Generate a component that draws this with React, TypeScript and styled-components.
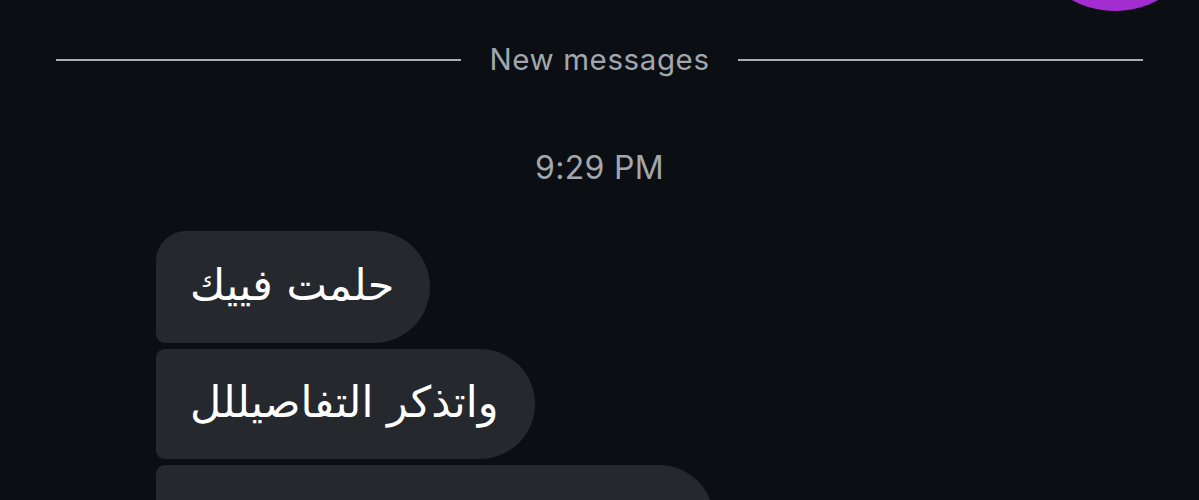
import React from "react";
import styled, { createGlobalStyle } from "styled-components";

const GlobalStyle = createGlobalStyle`
  html, body {
    margin: 0;
    padding: 0;
    background: #0b0e12;
  }
  body {
    font-family: Inter, "Noto Sans", "DejaVu Sans", sans-serif;
    -webkit-font-smoothing: antialiased;
  }
`;

const Page = styled.div`
  width: 1199px;
  height: 500px;
  overflow: hidden;
  box-sizing: border-box;
  padding: 0 56px;
  background: #0b0e12;
  display: flex;
  flex-direction: column;
`;

const AvatarRow = styled.div`
  height: 11px;
  display: flex;
  justify-content: flex-end;
  flex-shrink: 0;
`;

const Avatar = styled.div`
  width: 180px;
  height: 180px;
  border-radius: 50%;
  background: #a42dd2;
  margin-top: -169px;
  margin-right: -62px;
  flex-shrink: 0;
`;

const Divider = styled.div`
  margin-top: 36px;
  display: flex;
  align-items: center;
  gap: 28px;
  height: 26px;
  flex-shrink: 0;
`;

const Rule = styled.div`
  flex: 1;
  height: 2px;
  background: #a8adb4;
`;

const DividerLabel = styled.span`
  font-size: 29.5px;
  letter-spacing: 0.6px;
  color: #a2a7ae;
  line-height: 1;
  white-space: nowrap;
`;

const Timestamp = styled.div`
  margin-top: 79px;
  text-align: center;
  font-size: 32px;
  color: #a2a7ae;
  line-height: 1;
  letter-spacing: 0.3px;
  flex-shrink: 0;
`;

const Messages = styled.div`
  margin-top: 47px;
  padding-left: 100px;
  display: flex;
  flex-direction: column;
  align-items: flex-start;
  gap: 6px;
  flex-shrink: 0;
`;

type Pos = "first" | "middle";

const Bubble = styled.div<{ $pos: Pos; $h: number }>`
  background: #25282d;
  color: #ffffff;
  height: ${(p) => p.$h}px;
  box-sizing: border-box;
  padding: 0 36px 0 34px;
  display: flex;
  align-items: center;
  border-radius: ${(p) =>
    p.$pos === "first" ? "30px 56px 56px 9px" : "9px 56px 56px 9px"};
  font-family: "DejaVu Sans", "Noto Sans", sans-serif;
  font-size: 43px;
  line-height: 1;
  white-space: nowrap;
  flex-shrink: 0;
`;

const BubbleText = styled.span`
  direction: rtl;
  unicode-bidi: isolate;
  padding-bottom: 4px;
`;

const messages: { text: string; pos: Pos; h: number }[] = [
  { text: "حلمت فييك", pos: "first", h: 112 },
  { text: "واتذكر التفاصيللل", pos: "middle", h: 110 },
  { text: "كنا نمشي سوا ع شط البحر", pos: "middle", h: 110 },
];

export default function App() {
  return (
    <>
      <GlobalStyle />
      <Page>
        <AvatarRow>
          <Avatar />
        </AvatarRow>
        <Divider>
          <Rule />
          <DividerLabel>New messages</DividerLabel>
          <Rule />
        </Divider>
        <Timestamp>9:29 PM</Timestamp>
        <Messages>
          {messages.map((m, i) => (
            <Bubble key={i} $pos={m.pos} $h={m.h}>
              <BubbleText dir="rtl">{m.text}</BubbleText>
            </Bubble>
          ))}
        </Messages>
      </Page>
    </>
  );
}
